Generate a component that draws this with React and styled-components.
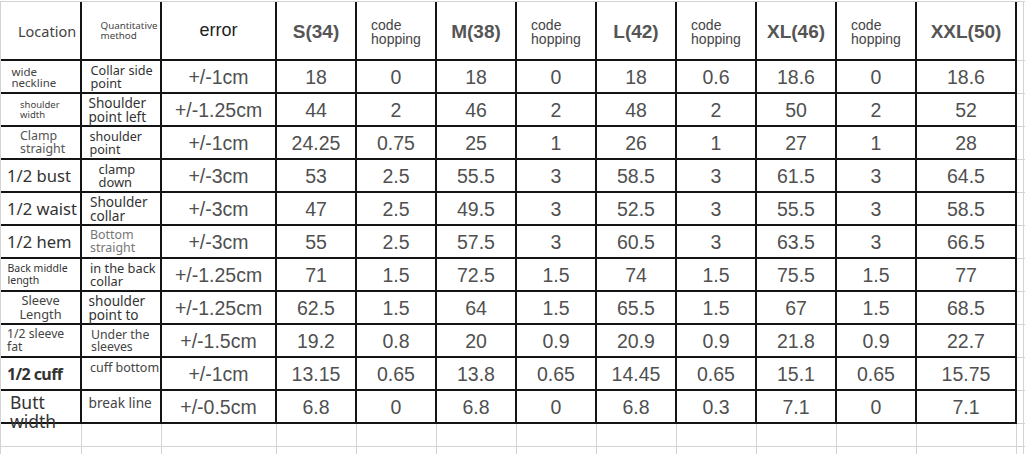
import React from 'react';
import styled, { createGlobalStyle } from 'styled-components';

const Global = createGlobalStyle`
  html, body { margin: 0; padding: 0; background: #fff; overflow: hidden; }
  body { width: 1025px; height: 454px; }
`;

const GRID = '#d3d3d3';
const INK = '#141414';

const Sheet = styled.div`
  display: grid;
  grid-template-columns: 81px 80px 115px repeat(8, 80px) 100px 7px 40px;
  grid-template-rows: 59px repeat(11, 33px) 23px 40px;
  width: max-content;
  margin-top: 1px;
  border-top: 1px solid ${GRID};
  border-left: 1px solid ${GRID};
`;

const Cell = styled.div`
  box-sizing: border-box;
  border-right: ${p => (p.$grid ? `1px solid ${GRID}` : `2px solid ${INK}`)};
  border-bottom: ${p => (p.$grid ? `1px solid ${GRID}` : `2px solid ${INK}`)};
  display: flex;
  align-items: ${p => (p.$top ? 'flex-start' : 'center')};
  justify-content: ${p => (p.$left ? 'flex-start' : 'center')};
  padding-left: ${p => p.$pl || 0}px;
  padding-top: ${p => p.$pt || 0}px;
  overflow: visible;
  min-width: 0;
`;

const Label = styled.span`
  font-family: "Noto Sans", "Open Sans", sans-serif;
  font-size: ${p => p.$size}px;
  line-height: ${p => p.$lh}px;
  color: ${p => p.$color || '#333'};
  font-weight: ${p => (p.$bold ? 700 : 400)};
  letter-spacing: ${p => p.$ls || 0}px;
  white-space: nowrap;
  text-align: ${p => (p.$center ? 'center' : 'left')};
`;

const Value = styled.span`
  font-family: "Liberation Sans", Arial, sans-serif;
  font-size: 19.5px;
  line-height: 22px;
  color: #505050;
  white-space: nowrap;
`;

const ErrorHead = styled.span`
  font-family: "Liberation Sans", Arial, sans-serif;
  font-size: 18px;
  color: #222;
`;

const SizeHead = styled.span`
  font-family: "Liberation Sans", Arial, sans-serif;
  font-size: 19px;
  font-weight: 700;
  color: #555;
  padding-top: 2px;
`;

const HopHead = styled.span`
  font-family: "Liberation Sans", Arial, sans-serif;
  font-size: 14px;
  line-height: 14px;
  color: #444;
  text-align: left;
  padding-top: 3px;
`;

const Lines = ({ lines }) =>
  lines.map((l, i) => (
    <React.Fragment key={i}>
      {i > 0 && <br />}
      {l}
    </React.Fragment>
  ));

const rows = [
  {
    loc: { lines: ['wide', 'neckline'], size: 11.5, lh: 11, pl: 10.5, color: '#444' },
    method: { lines: ['Collar side', 'point'], size: 12.7, lh: 13, pl: 8.5 },
    err: '+/-1cm',
    vals: ['18', '0', '18', '0', '18', '0.6', '18.6', '0', '18.6'],
  },
  {
    loc: { lines: ['shoulder', 'width'], size: 9.5, lh: 10, pl: 19, color: '#444' },
    method: { lines: ['Shoulder', 'point left'], size: 13.6, lh: 13.5, pl: 6.5 },
    err: '+/-1.25cm',
    vals: ['44', '2', '46', '2', '48', '2', '50', '2', '52'],
  },
  {
    loc: { lines: ['Clamp', 'straight'], size: 12.4, lh: 12.5, pl: 19, color: '#555' },
    method: { lines: ['shoulder', 'point'], size: 12.6, lh: 13, pl: 7.5 },
    err: '+/-1cm',
    vals: ['24.25', '0.75', '25', '1', '26', '1', '27', '1', '28'],
  },
  {
    loc: { lines: ['1/2 bust'], size: 16.6, lh: 20, pl: 6 },
    method: { lines: ['clamp', 'down'], size: 12.9, lh: 13, pl: 16.5 },
    err: '+/-3cm',
    vals: ['53', '2.5', '55.5', '3', '58.5', '3', '61.5', '3', '64.5'],
  },
  {
    loc: { lines: ['1/2 waist'], size: 16.6, lh: 20, pl: 6 },
    method: { lines: ['Shoulder', 'collar'], size: 13.6, lh: 13.5, pl: 8 },
    err: '+/-3cm',
    vals: ['47', '2.5', '49.5', '3', '52.5', '3', '55.5', '3', '58.5'],
  },
  {
    loc: { lines: ['1/2 hem'], size: 16.6, lh: 20, pl: 6 },
    method: { lines: ['Bottom', 'straight'], size: 12.4, lh: 12.5, pl: 8, color: '#777' },
    err: '+/-3cm',
    vals: ['55', '2.5', '57.5', '3', '60.5', '3', '63.5', '3', '66.5'],
  },
  {
    loc: { lines: ['Back middle', 'length'], size: 10.5, lh: 11.5, pl: 6.5 },
    method: { lines: ['in the back', 'collar'], size: 12.8, lh: 13, pl: 8 },
    err: '+/-1.25cm',
    vals: ['71', '1.5', '72.5', '1.5', '74', '1.5', '75.5', '1.5', '77'],
  },
  {
    loc: { lines: ['Sleeve', 'Length'], size: 12.8, lh: 13.5, center: true, color: '#444' },
    method: { lines: ['shoulder', 'point to'], size: 13.6, lh: 13.5, pl: 6.5 },
    err: '+/-1.25cm',
    vals: ['62.5', '1.5', '64', '1.5', '65.5', '1.5', '67', '1.5', '68.5'],
  },
  {
    loc: { lines: ['1/2 sleeve', 'fat'], size: 12.2, lh: 12.5, pl: 6, color: '#444' },
    method: { lines: ['Under the', 'sleeves'], size: 12.3, lh: 12, pl: 9, color: '#444' },
    err: '+/-1.5cm',
    vals: ['19.2', '0.8', '20', '0.9', '20.9', '0.9', '21.8', '0.9', '22.7'],
  },
  {
    loc: { lines: ['1/2 cuff'], size: 16, lh: 20, pl: 6, bold: true, ls: -0.6 },
    method: { lines: ['cuff bottom'], size: 12.5, lh: 13, pl: 8, top: true, pt: 3, color: '#444' },
    err: '+/-1cm',
    vals: ['13.15', '0.65', '13.8', '0.65', '14.45', '0.65', '15.1', '0.65', '15.75'],
  },
  {
    loc: { lines: ['Butt', 'width'], size: 17.5, lh: 19, pl: 9, top: true, pt: 2 },
    method: { lines: ['break line'], size: 13.7, lh: 14, pl: 6.5, top: true, pt: 5, color: '#444' },
    err: '+/-0.5cm',
    vals: ['6.8', '0', '6.8', '0', '6.8', '0.3', '7.1', '0', '7.1'],
  },
];

const sizes = ['S(34)', 'M(38)', 'L(42)', 'XL(46)', 'XXL(50)'];

const LabelCell = ({ d }) => (
  <Cell $left={!d.center} $pl={d.pl} $top={d.top} $pt={d.pt}>
    <Label
      $size={d.size}
      $lh={d.lh}
      $color={d.color}
      $bold={d.bold}
      $ls={d.ls}
      $center={d.center}
    >
      <Lines lines={d.lines} />
    </Label>
  </Cell>
);

const Filler = ({ n }) =>
  Array.from({ length: n }, (_, i) => <Cell key={i} $grid />);

export default function App() {
  return (
    <>
      <Global />
      <Sheet>
        <Cell $left $pl={17}>
          <Label $size={14.5} $lh={18} $color="#444">Location</Label>
        </Cell>
        <Cell $left $pl={18.5}>
          <Label $size={9.8} $lh={10} $color="#444">
            <Lines lines={['Quantitative', 'method']} />
          </Label>
        </Cell>
        <Cell>
          <ErrorHead>error</ErrorHead>
        </Cell>
        {sizes.map((s, i) => (
          <React.Fragment key={s}>
            <Cell>
              <SizeHead>{s}</SizeHead>
            </Cell>
            {i < sizes.length - 1 && (
              <Cell>
                <HopHead>
                  code
                  <br />
                  hopping
                </HopHead>
              </Cell>
            )}
          </React.Fragment>
        ))}
        <Filler n={2} />

        {rows.map((r, ri) => (
          <React.Fragment key={ri}>
            <LabelCell d={r.loc} />
            <LabelCell d={r.method} />
            <Cell>
              <Value>{r.err}</Value>
            </Cell>
            {r.vals.map((v, vi) => (
              <Cell key={vi}>
                <Value>{v}</Value>
              </Cell>
            ))}
            <Filler n={2} />
          </React.Fragment>
        ))}

        <Filler n={14} />
        <Filler n={14} />
      </Sheet>
    </>
  );
}
